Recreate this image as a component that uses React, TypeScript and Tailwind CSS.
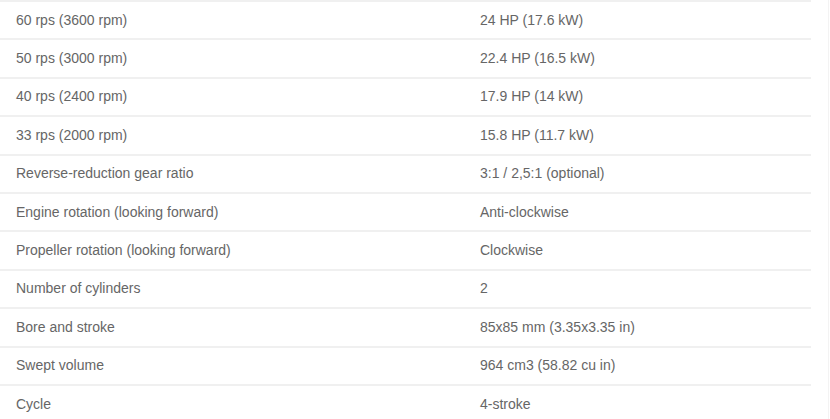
import React from "react";

const rows: [string, string][] = [
  ["60 rps (3600 rpm)", "24 HP (17.6 kW)"],
  ["50 rps (3000 rpm)", "22.4 HP (16.5 kW)"],
  ["40 rps (2400 rpm)", "17.9 HP (14 kW)"],
  ["33 rps (2000 rpm)", "15.8 HP (11.7 kW)"],
  ["Reverse-reduction gear ratio", "3:1 / 2,5:1 (optional)"],
  ["Engine rotation (looking forward)", "Anti-clockwise"],
  ["Propeller rotation (looking forward)", "Clockwise"],
  ["Number of cylinders", "2"],
  ["Bore and stroke", "85x85 mm (3.35x3.35 in)"],
  ["Swept volume", "964 cm3 (58.82 cu in)"],
  ["Cycle", "4-stroke"],
];

export default function App() {
  return (
    <div className="w-[830px] h-[419px] overflow-hidden bg-white" style={{ fontFamily: '"Liberation Sans", Arial, sans-serif' }}>
      <div className="w-[829px] h-full border-r border-[#f3f3f3]">
        <div className="w-[811px]">
          {rows.map(([a, b], i) => (
            <div key={i} className="flex items-center h-[38.4px] border-t-2 border-[#f0f0f0] text-[14px] text-[#666666]">
              <div className="w-[464px] pl-[16px]">{a}</div>
              <div className="pl-[16px]">{b}</div>
            </div>
          ))}
        </div>
      </div>
    </div>
  );
}
